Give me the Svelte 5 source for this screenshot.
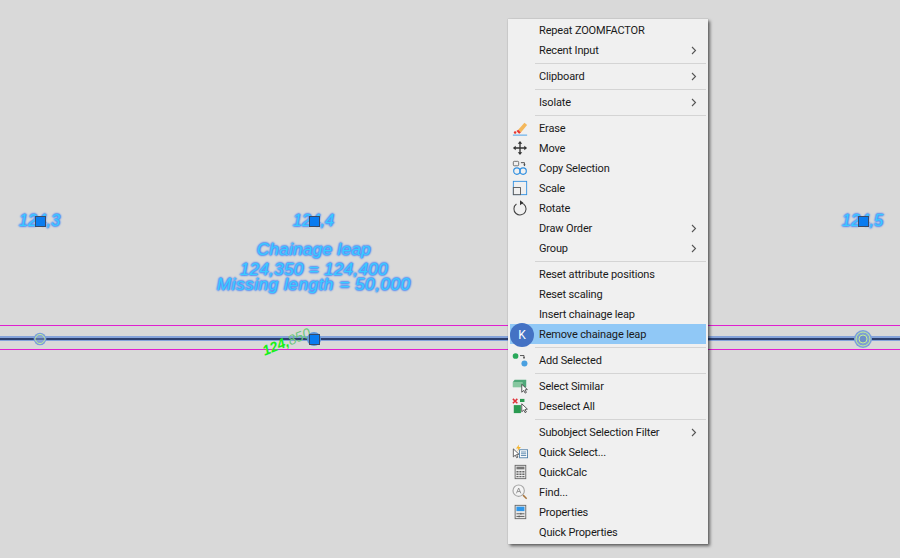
<script>
  const items = [
    { t: 'Repeat ZOOMFACTOR' },
    { t: 'Recent Input', sub: true },
    { sep: true },
    { t: 'Clipboard', sub: true },
    { sep: true },
    { t: 'Isolate', sub: true },
    { sep: true },
    { t: 'Erase', icon: 'erase' },
    { t: 'Move', icon: 'move' },
    { t: 'Copy Selection', icon: 'copy' },
    { t: 'Scale', icon: 'scale' },
    { t: 'Rotate', icon: 'rotate' },
    { t: 'Draw Order', sub: true },
    { t: 'Group', sub: true },
    { sep: true },
    { t: 'Reset attribute positions' },
    { t: 'Reset scaling' },
    { t: 'Insert chainage leap' },
    { t: 'Remove chainage leap', active: true },
    { sep: true },
    { t: 'Add Selected', icon: 'add' },
    { sep: true },
    { t: 'Select Similar', icon: 'similar' },
    { t: 'Deselect All', icon: 'deselect' },
    { sep: true },
    { t: 'Subobject Selection Filter', sub: true },
    { t: 'Quick Select...', icon: 'quick' },
    { t: 'QuickCalc', icon: 'calc' },
    { t: 'Find...', icon: 'find' },
    { t: 'Properties', icon: 'props' },
    { t: 'Quick Properties' }
  ];
  const grips = [
    { x: 40, y: 221 },
    { x: 314, y: 221 },
    { x: 863, y: 221 },
    { x: 314, y: 339 }
  ];
</script>

<div class="canvas">
  <div class="hline magenta" style="top:325px"></div>
  <div class="hline magenta" style="top:349px"></div>
  <div class="axis"></div>

  <span class="cad" style="left:19px;top:210px">124,3</span>
  <span class="cad" style="left:293px;top:210px">124,4</span>
  <span class="cad" style="left:842px;top:210px">124,5</span>
  <div class="note">
    <span class="n1">Chainage leap</span>
    <span class="n2">124,350 = 124,400</span>
    <span class="n3">Missing length = 50,000</span>
  </div>
  <span class="station">124,<i>850</i></span>

  <svg class="node" style="left:30px;top:329px" width="20" height="20" viewBox="0 0 20 20">
    <circle cx="10" cy="10" r="6.3" fill="#7c9fdc" />
    <circle cx="10" cy="10" r="4.6" fill="#8aa6d8" stroke="#c4ee96" stroke-width="1" />
    <path d="M5.5 10h9" stroke="#3a4c78" stroke-width="1.2" />
  </svg>
  <svg class="node" style="left:853px;top:329px" width="20" height="20" viewBox="0 0 20 20">
    <circle cx="10" cy="10" r="9" fill="#7c9fdc" />
    <circle cx="10" cy="10" r="7" fill="#7f9fd4" stroke="#c4ee96" stroke-width="1" />
    <circle cx="10" cy="10" r="4" fill="#6e90c8" stroke="#c4ee96" stroke-width="1" />
  </svg>
  <div class="halo"></div>
  {#each grips as g}
    <div class="grip" style="left:{g.x - 5}px;top:{g.y - 5}px"></div>
  {/each}

  <div class="menu">
    {#each items as it}
      {#if it.sep}
        <div class="sep"></div>
      {:else}
        <div class="row" class:active={it.active}>
          <span class="ic">
            {#if it.icon === 'erase'}
              <svg width="16" height="16" viewBox="0 0 18 18">
                <path d="M7 11 14 3l3 2.5L10 14z" fill="#f4b75a" />
                <path d="M5 12.5 7 11l3 3-2 1.5z" fill="#e8352c" />
                <circle cx="3.5" cy="14" r="1.4" fill="#e8352c" />
                <path d="M1 17h16" stroke="#3b9be8" stroke-width="1" />
              </svg>
            {:else if it.icon === 'move'}
              <svg width="16" height="16" viewBox="0 0 18 18">
                <path d="M9 2.5v13M2.5 9h13" stroke="#333" stroke-width="1.5" />
                <path d="M9 1 6.5 4.2h5zM9 17l-2.5-3.2h5zM1 9l3.2-2.5v5zM17 9l-3.2-2.5v5z" fill="#333" />
              </svg>
            {:else if it.icon === 'copy'}
              <svg width="16" height="16" viewBox="0 0 18 18">
                <rect x="1.5" y="1.5" width="6" height="5" rx="1" fill="none" stroke="#666" />
                <path d="M10 3h4v3" fill="none" stroke="#444" />
                <path d="m12.6 5 1.4 2 1.4-2z" fill="#444" />
                <circle cx="5.5" cy="12.5" r="3.6" fill="none" stroke="#2f8fe0" stroke-width="1.3" />
                <circle cx="12.5" cy="12.5" r="3.6" fill="none" stroke="#2f8fe0" stroke-width="1.3" />
              </svg>
            {:else if it.icon === 'scale'}
              <svg width="16" height="16" viewBox="0 0 18 18">
                <rect x="1.5" y="1.5" width="15" height="15" fill="none" stroke="#2f8fe0" />
                <rect x="1.5" y="8.5" width="8" height="8" fill="#f0f0f0" stroke="#555" />
              </svg>
            {:else if it.icon === 'rotate'}
              <svg width="16" height="16" viewBox="0 0 18 18">
                <path d="M5 4.5A6.8 6.8 0 1 0 10.5 3.4" fill="none" stroke="#444" stroke-width="1.2" />
                <path d="m9 .4 3.8 2.8L9 6z" fill="#333" />
              </svg>
            {:else if it.icon === 'add'}
              <svg width="16" height="16" viewBox="0 0 18 18">
                <circle cx="4" cy="4.5" r="3.2" fill="#28a85a" />
                <circle cx="14" cy="13" r="3.4" fill="#4aa0e0" />
                <path d="M9 4h4.5v3" fill="none" stroke="#444" />
                <path d="m12.3 6 1.2 1.8L14.7 6z" fill="#444" />
              </svg>
            {:else if it.icon === 'similar'}
              <svg width="16" height="16" viewBox="0 0 18 18">
                <path d="M1 4.5 3 2h13v8H1z" fill="#4fa878" />
                <path d="M1 4.5h11v6H1z" fill="#86c79f" />
                <path d="M11 7v9l2.2-2 1.6 3 1.4-.8-1.6-2.8 2.7-.4z" fill="#fff" stroke="#333" stroke-width=".9" />
              </svg>
            {:else if it.icon === 'deselect'}
              <svg width="16" height="16" viewBox="0 0 18 18">
                <path d="m1 1 5 5m0-5L1 6" stroke="#e0323a" stroke-width="1.7" />
                <rect x="9" y="1" width="5" height="3.5" fill="#2a9a50" />
                <rect x="2" y="8" width="8" height="9" fill="#2a9a50" />
                <path d="M11 6.5v9l2.2-2 1.6 3 1.4-.8-1.6-2.8 2.7-.4z" fill="#fff" stroke="#333" stroke-width=".9" />
              </svg>
            {:else if it.icon === 'quick'}
              <svg width="16" height="16" viewBox="0 0 18 18">
                <path d="M8 .5 4.5 5H7L6 8.5l4-5H7.5z" fill="#f5b52e" />
                <path d="M1.5 5.5v9l2.2-2 1.6 3 1.4-.8-1.6-2.8 2.7-.4z" fill="#fff" stroke="#444" stroke-width=".9" />
                <rect x="8.5" y="6.5" width="9" height="9" fill="#fff" stroke="#4d7ea8" />
                <path d="M10 9h6M10 11h6M10 13h6" stroke="#4d7ea8" />
              </svg>
            {:else if it.icon === 'calc'}
              <svg width="16" height="16" viewBox="0 0 18 18">
                <rect x="3.5" y="1.5" width="12" height="15" fill="#eee" stroke="#666" />
                <rect x="5" y="3" width="9" height="3" fill="#777" />
                <path d="M5 8h2.4v1.6H5zM8.3 8h2.4v1.6H8.3zM11.6 8H14v1.6h-2.4zM5 10.7h2.4v1.6H5zM8.3 10.7h2.4v1.6H8.3zM11.6 10.7H14v1.6h-2.4zM5 13.4h2.4V15H5zM8.3 13.4h2.4V15H8.3zM11.6 13.4H14V15h-2.4z" fill="#666" />
              </svg>
            {:else if it.icon === 'find'}
              <svg width="16" height="16" viewBox="0 0 18 18">
                <circle cx="7.5" cy="7.5" r="6.4" fill="#f4f4f4" stroke="#a6a6a6" stroke-width="1.3" />
                <path d="m5 10.5 2.5-6 2.5 6M6 8.5h3" fill="none" stroke="#8a8a8a" />
                <path d="m12.5 12.5 4 4" stroke="#a8763e" stroke-width="1.7" />
              </svg>
            {:else if it.icon === 'props'}
              <svg width="16" height="16" viewBox="0 0 18 18">
                <rect x="3.5" y="1.5" width="12" height="15" fill="#e8e8e8" stroke="#666" />
                <rect x="5" y="3" width="9" height="5" fill="#2f97ea" />
                <path d="M5 11h9M5 14h9" stroke="#555" />
                <path d="M10 10v2M8 13v2" stroke="#555" />
              </svg>
            {/if}
          </span>
          <span class="lbl">{it.t}</span>
          {#if it.sub}
            <svg class="chev" width="6" height="9" viewBox="0 0 6 9"><path d="m1 1 3.5 3.5L1 8" fill="none" stroke="#555" stroke-width="1.1" /></svg>
          {/if}
          {#if it.active}
            <span class="badge">K</span>
          {/if}
        </div>
      {/if}
    {/each}
  </div>
</div>

<style>
  :global(body) {
    margin: 0;
    background: #d9d9d9;
  }
  .canvas {
    position: relative;
    width: 900px;
    height: 558px;
    overflow: hidden;
    background: #d9d9d9;
  }
  .hline {
    position: absolute;
    left: 0;
    width: 100%;
    height: 1px;
  }
  .magenta {
    background: #e01fd0;
  }
  .axis {
    position: absolute;
    left: 0;
    top: 336px;
    width: 100%;
    height: 5px;
    background: #85a3da;
  }
  .axis::after {
    content: '';
    display: block;
    height: 2px;
    position: relative;
    top: 2px;
    background: #2c4070;
  }
  .cad,
  .note span {
    font-family: 'Liberation Sans', sans-serif;
    font-style: italic;
    color: #38ccff;
    text-shadow: 0 0 1.5px #4f86ff, 1px 0 1.5px #5f95f5, -1px 0 1.5px #5f95f5, 0 1px 1.5px #5f95f5, 0 -1px 1.5px #5f95f5;
    white-space: nowrap;
  }
  .cad {
    position: absolute;
    font-size: 16px;
    line-height: 22px;
    letter-spacing: 0.3px;
  }
  .note {
    position: absolute;
    left: 214px;
    top: 241px;
    width: 200px;
    display: flex;
    flex-direction: column;
    align-items: center;
  }
  .note span {
    font-size: 17px;
    line-height: 18px;
    letter-spacing: 0.35px;
  }
  .note .n1 {
    margin-bottom: 3px;
  }
  .note .n2 {
    line-height: 16px;
  }
  .note .n3 {
    line-height: 14px;
    letter-spacing: 0.6px;
  }
  .station {
    position: absolute;
    left: 263px;
    top: 344px;
    font: italic bold 14px/14px 'Liberation Sans', sans-serif;
    color: #18f018;
    transform: rotate(-22deg);
    transform-origin: left center;
    white-space: nowrap;
  }
  .station i {
    font-weight: normal;
    color: #6cc87c;
  }
  .node {
    position: absolute;
  }
  .halo {
    position: absolute;
    left: 307px;
    top: 332px;
    width: 14px;
    height: 14px;
    border-radius: 50%;
    background: #5c96dc;
  }
  .grip {
    position: absolute;
    width: 9px;
    height: 9px;
    background: #0a7cf0;
    border: 1px solid #3a4a66;
  }
  .menu {
    position: absolute;
    left: 508px;
    top: 19px;
    width: 200px;
    box-sizing: border-box;
    background: #f0f0f0;
    padding: 1px 2px 2px 2px;
    box-shadow: 2px 2px 3px rgba(0, 0, 0, 0.55), 0 0 1px rgba(0, 0, 0, 0.25);
    font-family: Roboto, sans-serif;
    font-size: 11px;
    letter-spacing: -0.15px;
    color: #1a1a1a;
  }
  .row {
    position: relative;
    height: 20px;
    display: flex;
    align-items: center;
  }
  .row.active {
    background: #90c8f6;
  }
  .ic {
    flex: none;
    width: 20px;
    height: 20px;
    margin-right: 9px;
    display: flex;
    align-items: center;
    justify-content: center;
  }
  .lbl {
    flex: 1;
    white-space: nowrap;
    line-height: 18px;
    margin-top: 2px;
  }
  .chev {
    position: absolute;
    right: 9px;
    top: 6px;
  }
  .sep {
    height: 1px;
    margin: 3px 0 2px 25px;
    background: #d4d4d4;
  }
  .badge {
    position: absolute;
    left: 0;
    top: -1px;
    width: 24px;
    height: 24px;
    border-radius: 50%;
    background: #4472c4;
    color: #fff;
    font-size: 12px;
    line-height: 24px;
    text-align: center;
  }
</style>
